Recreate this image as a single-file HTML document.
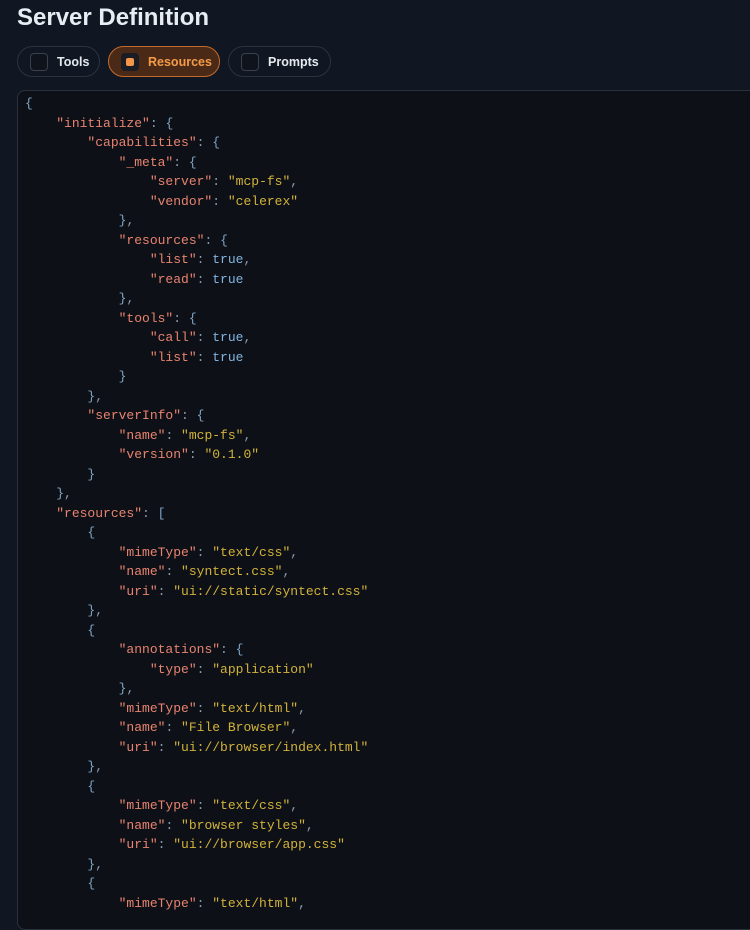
<!DOCTYPE html>
<html><head><meta charset="utf-8"><style>
html,body{margin:0;padding:0;background:#111722;width:750px;height:900px;overflow:hidden;font-family:"Liberation Sans",sans-serif}
h1{position:absolute;left:17px;top:4px;margin:0;font-size:24px;font-weight:bold;color:#e8edf3}
.tabs{position:absolute;left:17px;top:46px;display:flex;gap:8px}
.tab{height:31px;border:1px solid #2c333e;border-radius:16px;display:flex;align-items:center;padding:0 0 0 12px;color:#e6e9ee;font-size:12.5px;font-weight:bold;box-sizing:border-box;white-space:nowrap}
.tab .cb{flex:0 0 18px;width:18px;height:18px;border:1px solid #3a414c;border-radius:4px;background:#0f141c;margin-right:9px;box-sizing:border-box;position:relative}
.tab.on{background:#4a2a17;border-color:#c26a2c;color:#f59a48}
.tab.on .cb{background:#1a1d24;border-color:#1a1d24}
.tab.on .cb:after{content:"";position:absolute;left:4px;top:4px;width:8px;height:8px;border-radius:2px;background:#f5954a}
.code{position:absolute;left:17px;top:90px;width:760px;height:840px;background:#0d1117;border:1px solid #2a313c;border-radius:8px;box-sizing:border-box}
pre{margin:0;position:absolute;left:25px;top:94px;font-family:"Liberation Mono",monospace;font-size:13px;line-height:19.5px;color:#8b9db0}
.k{color:#e8836f}.s{color:#d2b23a}.b{color:#82b4e0}.p{color:#7fa3c4}
</style></head><body>
<h1>Server Definition</h1>
<div class="tabs">
<div class="tab" style="width:83px"><span class="cb"></span>Tools</div>
<div class="tab on" style="width:112px"><span class="cb"></span>Resources</div>
<div class="tab" style="width:103px"><span class="cb"></span>Prompts</div>
</div>
<div class="code"></div>
<pre><span class="p">{</span>
    <span class="k">"initialize"</span>: <span class="p">{</span>
        <span class="k">"capabilities"</span>: <span class="p">{</span>
            <span class="k">"_meta"</span>: <span class="p">{</span>
                <span class="k">"server"</span>: <span class="s">"mcp-fs"</span>,
                <span class="k">"vendor"</span>: <span class="s">"celerex"</span>
            <span class="p">}</span>,
            <span class="k">"resources"</span>: <span class="p">{</span>
                <span class="k">"list"</span>: <span class="b">true</span>,
                <span class="k">"read"</span>: <span class="b">true</span>
            <span class="p">}</span>,
            <span class="k">"tools"</span>: <span class="p">{</span>
                <span class="k">"call"</span>: <span class="b">true</span>,
                <span class="k">"list"</span>: <span class="b">true</span>
            <span class="p">}</span>
        <span class="p">}</span>,
        <span class="k">"serverInfo"</span>: <span class="p">{</span>
            <span class="k">"name"</span>: <span class="s">"mcp-fs"</span>,
            <span class="k">"version"</span>: <span class="s">"0.1.0"</span>
        <span class="p">}</span>
    <span class="p">}</span>,
    <span class="k">"resources"</span>: <span class="p">[</span>
        <span class="p">{</span>
            <span class="k">"mimeType"</span>: <span class="s">"text/css"</span>,
            <span class="k">"name"</span>: <span class="s">"syntect.css"</span>,
            <span class="k">"uri"</span>: <span class="s">"ui://static/syntect.css"</span>
        <span class="p">}</span>,
        <span class="p">{</span>
            <span class="k">"annotations"</span>: <span class="p">{</span>
                <span class="k">"type"</span>: <span class="s">"application"</span>
            <span class="p">}</span>,
            <span class="k">"mimeType"</span>: <span class="s">"text/html"</span>,
            <span class="k">"name"</span>: <span class="s">"File Browser"</span>,
            <span class="k">"uri"</span>: <span class="s">"ui://browser/index.html"</span>
        <span class="p">}</span>,
        <span class="p">{</span>
            <span class="k">"mimeType"</span>: <span class="s">"text/css"</span>,
            <span class="k">"name"</span>: <span class="s">"browser styles"</span>,
            <span class="k">"uri"</span>: <span class="s">"ui://browser/app.css"</span>
        <span class="p">}</span>,
        <span class="p">{</span>
            <span class="k">"mimeType"</span>: <span class="s">"text/html"</span>,
</pre>
</body></html>
